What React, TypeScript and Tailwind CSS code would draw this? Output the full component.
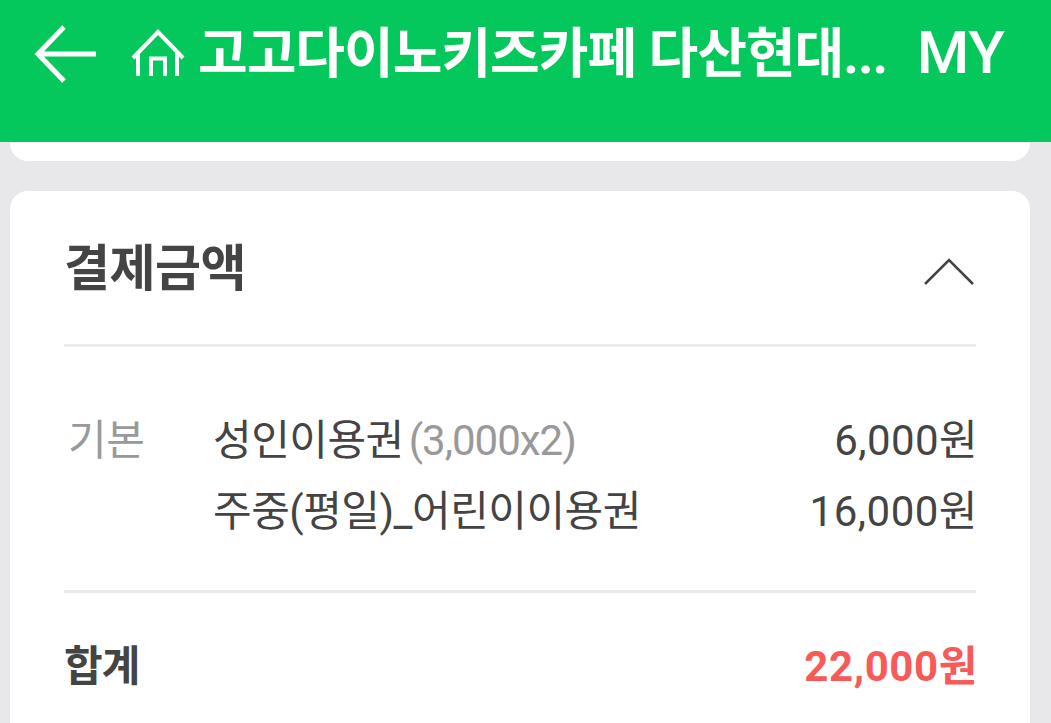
export default function App() {
  return (
    <div className="h-[723px] w-[1051px] overflow-hidden bg-[#e8e8ea] font-['Roboto','Noto_Sans_CJK_KR',sans-serif]">
      <header className="flex h-[142px] items-start bg-[#05c85c] pl-[34px] pr-[46px] pt-[23px] text-white">
        <svg width="64" height="62" viewBox="0 0 64 62" fill="none" stroke="white" strokeWidth="5" className="shrink-0">
          <path d="M30 4 L4 31 L30 58 M4 31 H62" />
        </svg>
        <svg width="56" height="50" viewBox="0 0 56 50" fill="none" stroke="white" strokeWidth="4" className="ml-[32px] mt-[6px] shrink-0">
          <path d="M3 29 L28 3 L53 29 M8 23 V47 M47 23 V47 M21 47 V29.5 H35 V47" />
        </svg>
        <div className="ml-[12px] w-[690px] shrink-0 whitespace-nowrap text-[54px] font-bold leading-[64px] tracking-[-1px]">고고다이노키즈카페 다산현대...</div>
        <div className="ml-auto text-[60px] font-medium leading-[60px]">MY</div>
      </header>
      <div className="ml-[10px] h-[19px] w-[1020px] rounded-b-[18px] bg-white" />
      <section className="ml-[10px] mt-[30px] h-[560px] w-[1020px] rounded-t-[18px] bg-white pl-[54px] pr-[54px]">
        <div className="flex h-[156px] items-center justify-between border-b-[3px] border-[#ebebeb]">
          <h2 className="mt-[2px] text-[50px] font-bold leading-none tracking-[-0.5px] text-[#444444]">결제금액</h2>
          <svg width="52" height="30" viewBox="0 0 52 30" fill="none" stroke="#444444" strokeWidth="2.5" className="mt-[4px]">
            <path d="M1 29 L25 5 L49 29" />
          </svg>
        </div>
        <div className="flex h-[246px] border-b-[3px] border-[#ebebeb] pt-[58px] text-[42px] leading-[71px] tracking-[-0.5px] text-[#444444]">
          <div className="w-[149px] pl-[4px] text-[#999999]">기본</div>
          <div className="flex-1">
            <div className="-mr-[2px] flex justify-between">
              <span>성인이용권<span className="ml-[5px] tracking-[-1px] text-[#999999]">(3,000x2)</span></span>
              <span className="tracking-[0.4px]">6,000원</span>
            </div>
            <div className="-mr-[2px] flex justify-between">
              <span>주중(평일)_어린이이용권</span>
              <span className="tracking-[0.5px]">16,000원</span>
            </div>
          </div>
        </div>
        <div className="-mr-[2px] flex items-center justify-between pt-[44px] text-[42px] font-bold leading-[60px]">
          <span className="tracking-[-1px] text-[#444444]">합계</span>
          <span className="tracking-[0.6px] text-[#f85a5a]">22,000원</span>
        </div>
      </section>
    </div>
  );
}
